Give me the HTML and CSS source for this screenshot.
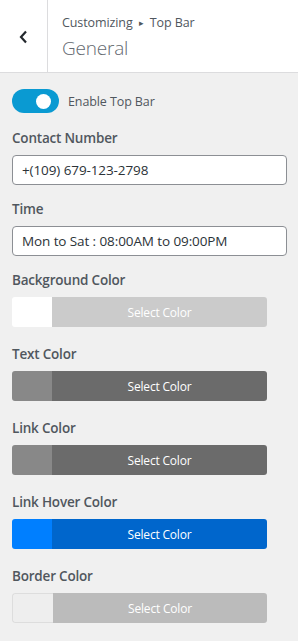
FILE: index.html
```html
<!DOCTYPE html>
<html>
<head>
<meta charset="utf-8">
<title>Customizing Top Bar</title>
<link rel="stylesheet" href="styles.css">
</head>
<body>
<div class="panel">
	<div class="header">
		<div class="back">
			<svg width="12" height="14" viewBox="0 0 12 14"><polyline points="8,1.5 3,7 8,12.5" fill="none" stroke="#23282d" stroke-width="2.2"/></svg>
		</div>
		<div class="title">
			<div class="crumb">Customizing <span class="arrow">&#9656;</span> Top Bar</div>
			<div class="section">General</div>
		</div>
	</div>
	<div class="content">
		<div class="toggle-row">
			<span class="toggle"><span class="knob"></span></span>
			<span class="toggle-label">Enable Top Bar</span>
		</div>

		<div class="field">
			<label>Contact Number</label>
			<input class="text" type="text" value="+(109) 679-123-2798">
		</div>
		<div class="field">
			<label>Time</label>
			<input class="text" type="text" value="Mon to Sat : 08:00AM to 09:00PM">
		</div>

		<div class="field color">
			<label>Background Color</label>
			<div class="picker bg"><span class="swatch"></span><span class="select">Select Color</span></div>
		</div>
		<div class="field color">
			<label>Text Color</label>
			<div class="picker txt"><span class="swatch"></span><span class="select">Select Color</span></div>
		</div>
		<div class="field color">
			<label>Link Color</label>
			<div class="picker txt"><span class="swatch"></span><span class="select">Select Color</span></div>
		</div>
		<div class="field color">
			<label>Link Hover Color</label>
			<div class="picker hover"><span class="swatch"></span><span class="select">Select Color</span></div>
		</div>
		<div class="field color">
			<label>Border Color</label>
			<div class="picker border"><span class="swatch"></span><span class="select">Select Color</span></div>
		</div>
	</div>
</div>
</body>
</html>
```

FILE: styles.css
```css
body{
	margin: 0;
	background-color: #f0f0f0;
	font-family: "Open Sans", "Noto Sans", sans-serif;
	color: #50575e;
}
.header{
	display: flex;
	height: 72px;
	background-color: #fff;
	border-bottom: 1px solid #dcdcde;
}
.back{
	width: 47px;
	border-right: 1px solid #dcdcde;
	display: flex;
	align-items: center;
	justify-content: center;
}
.back svg{
	margin-top: 1px;
	margin-left: 1px;
}
.title{
	padding-left: 14px;
	padding-top: 13px;
}
.crumb{
	font-size: 12.5px;
	line-height: 20px;
	color: #50575e;
	letter-spacing: -0.1px;
}
.crumb .arrow{
	font-size: 9px;
	margin: 0 3px;
	vertical-align: 1px;
}
.section{
	font-size: 19px;
	font-weight: 300;
	line-height: 28px;
	color: #646970;
	margin-top: 1px;
	letter-spacing: -0.2px;
}
.content{
	padding: 16px 12px 0 12px;
}
.toggle-row{
	display: flex;
	align-items: center;
	margin-bottom: 15px;
}
.toggle{
	display: flex;
	align-items: center;
	justify-content: flex-end;
	width: 47px;
	height: 24px;
	border-radius: 12px;
	background-color: #0a9ad2;
	padding-right: 8px;
	box-sizing: border-box;
}
.knob{
	width: 15px;
	height: 15px;
	border-radius: 50%;
	background-color: #fff;
}
.toggle-label{
	margin-left: 9px;
	font-size: 12.5px;
	letter-spacing: -0.1px;
}
.field{
	margin-bottom: 14px;
}
.field.color{
	margin-bottom: 17px;
}
.field label{
	display: block;
	font-size: 13.5px;
	font-weight: 600;
	line-height: 20px;
	color: #50575e;
	letter-spacing: -0.2px;
	margin-bottom: 7px;
}
.text{
	display: block;
	width: 275px;
	height: 30px;
	box-sizing: border-box;
	margin: 0;
	padding: 0 9px;
	border: 1px solid #8c8f94;
	border-radius: 4px;
	background-color: #fff;
	font-family: inherit;
	font-size: 13.5px;
	color: #2c3338;
	letter-spacing: -0.1px;
}
.picker{
	display: flex;
	width: 255px;
	height: 30px;
	border-radius: 3px;
	overflow: hidden;
}
.swatch{
	width: 40px;
}
.select{
	flex: 1;
	display: flex;
	align-items: center;
	justify-content: center;
	font-size: 12px;
	color: #fff;
	letter-spacing: -0.2px;
}
.bg .swatch{ background-color: #fff; }
.bg .select{ background-color: #cbcbcb; }
.txt .swatch{ background-color: #888; }
.txt .select{ background-color: #6b6b6b; }
.hover .swatch{ background-color: #007fff; }
.hover .select{ background-color: #0066cc; }
.border .swatch{ background-color: #eee; border: 1px solid #ddd; border-right: 0; border-radius: 3px 0 0 3px; }
.border .select{ background-color: #bbb; }
```
